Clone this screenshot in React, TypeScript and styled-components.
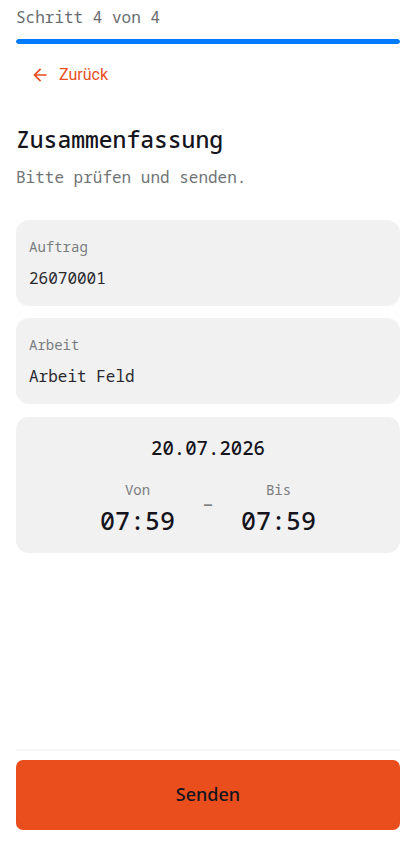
import styled, { createGlobalStyle } from "styled-components";

const GlobalStyle = createGlobalStyle`
  * {
    box-sizing: border-box;
  }
  body {
    margin: 0;
    background-color: #ffffff;
    color: #15141c;
    font-family: "Droid Sans Mono", "Noto Sans Mono", "DejaVu Sans Mono", "Liberation Mono", monospace;
  }
  h1, h2, p, dl, dd {
    margin: 0;
  }
`;

const Page = styled.div`
  display: flex;
  flex-direction: column;
  min-height: 100vh;
  padding: 5px 12px 17px 16px;
`;

const Step = styled.p`
  color: #686c70;
  font-size: 16px;
  line-height: 24px;
`;

const Progress = styled.div`
  height: 5px;
  margin-top: 10px;
  border-radius: 3px;
  background-color: #e5e5ea;
  overflow: hidden;
`;

const ProgressBar = styled.div`
  height: 100%;
  border-radius: 3px;
  background-color: #007aff;
`;

const BackButton = styled.button`
  display: flex;
  align-items: center;
  align-self: flex-start;
  gap: 9px;
  margin-top: 11px;
  padding: 8px 14px;
  border: 0;
  background: none;
  color: #ea4e1d;
  font-family: Roboto, sans-serif;
  font-size: 16px;
  line-height: 24px;
  cursor: pointer;
`;

const Title = styled.h1`
  margin-top: 28px;
  font-size: 23px;
  font-weight: 500;
  line-height: 32px;
`;

const Subtitle = styled.p`
  margin-top: 10px;
  color: #707477;
  font-size: 16px;
  line-height: 24px;
`;

const Cards = styled.div`
  display: flex;
  flex-direction: column;
  gap: 12px;
  margin-top: 31px;
`;

const Card = styled.dl`
  padding: 15px 13px 16px;
  border-radius: 13px;
  background-color: #f1f1f1;
`;

const Label = styled.dt`
  color: #7a7d80;
  font-size: 14px;
  line-height: 24px;
`;

const Value = styled.dd`
  margin-top: 7px;
  color: #2a2930;
  font-size: 16px;
  line-height: 24px;
`;

const TimeCard = styled.section`
  margin-top: 13px;
  padding: 16px 13px 15px;
  border-radius: 13px;
  background-color: #f1f1f1;
  text-align: center;
`;

const DateTitle = styled.h2`
  font-size: 19px;
  font-weight: 500;
  line-height: 30px;
`;

const TimeRange = styled.div`
  display: flex;
  align-items: flex-start;
  justify-content: center;
  gap: 27px;
  margin-top: 15px;
`;

const Time = styled.dd`
  font-size: 25px;
  font-weight: 500;
  line-height: 36px;
`;

const Dash = styled.span`
  color: #7a7d80;
  font-size: 20px;
  line-height: 52px;
`;

const Footer = styled.footer`
  margin-top: auto;
  padding-top: 9px;
  border-top: 2px solid #f7f7f7;
`;

const SendButton = styled.button`
  display: block;
  width: 100%;
  height: 70px;
  padding: 0 16px 3px;
  border: 0;
  border-radius: 7px;
  background-color: #ea4e1d;
  color: #15141c;
  font-family: "Noto Sans", sans-serif;
  font-size: 18px;
  font-weight: 500;
  cursor: pointer;
`;

interface IField {
  label: string;
  value: string;
}

const fields: IField[] = [
  { label: "Auftrag", value: "26070001" },
  { label: "Arbeit", value: "Arbeit Feld" },
];

const step = 4;
const stepCount = 4;

function App() {
  return (
    <>
      <GlobalStyle />
      <Page>
        <Step>
          Schritt {step} von {stepCount}
        </Step>
        <Progress>
          <ProgressBar style={{ width: `${(step / stepCount) * 100}%` }} />
        </Progress>
        <BackButton type="button">
          <svg width="20" height="20" viewBox="0 0 24 24" fill="currentColor" aria-hidden="true">
            <path d="M20 11H7.83l5.59-5.59L12 4l-8 8 8 8 1.41-1.41L7.83 13H20v-2z" />
          </svg>
          Zurück
        </BackButton>
        <Title>Zusammenfassung</Title>
        <Subtitle>Bitte prüfen und senden.</Subtitle>
        <Cards>
          {fields.map((field) => (
            <Card key={field.label}>
              <Label>{field.label}</Label>
              <Value>{field.value}</Value>
            </Card>
          ))}
        </Cards>
        <TimeCard>
          <DateTitle>20.07.2026</DateTitle>
          <TimeRange>
            <dl>
              <Label>Von</Label>
              <Time>07:59</Time>
            </dl>
            <Dash>–</Dash>
            <dl>
              <Label>Bis</Label>
              <Time>07:59</Time>
            </dl>
          </TimeRange>
        </TimeCard>
        <Footer>
          <SendButton type="submit">Senden</SendButton>
        </Footer>
      </Page>
    </>
  );
}

export default App;
